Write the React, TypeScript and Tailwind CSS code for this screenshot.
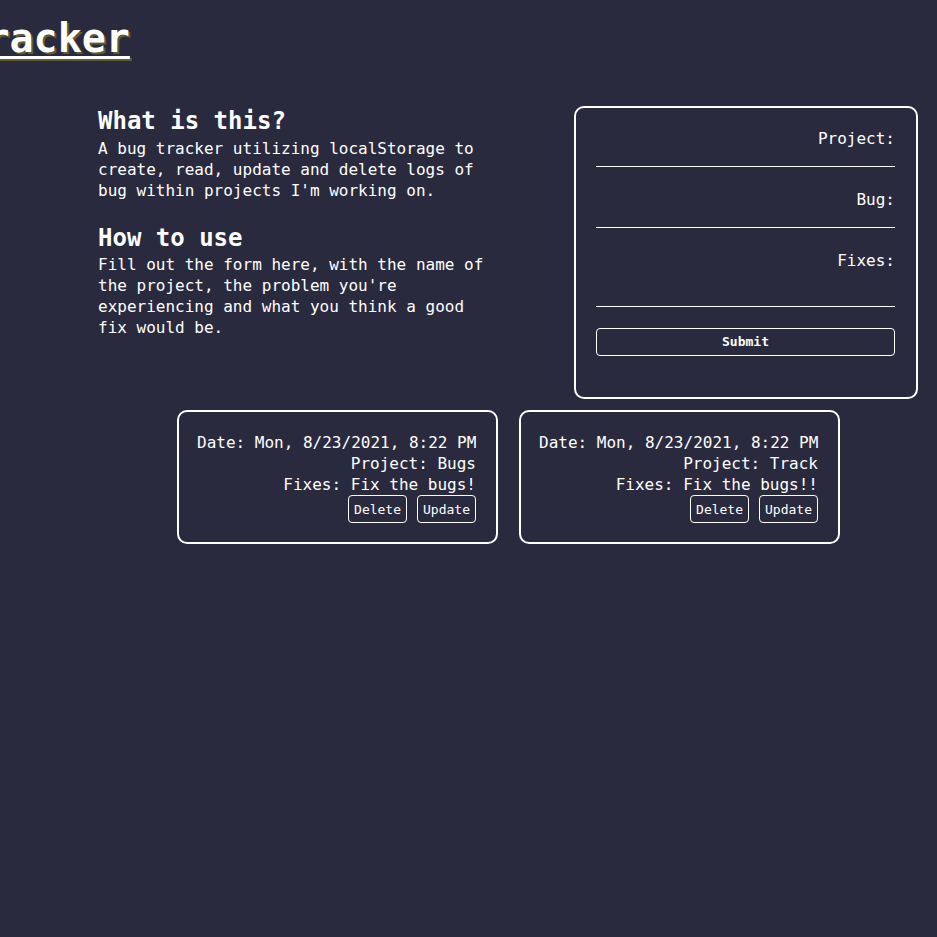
import React from "react";

const font = "font-['DejaVu_Sans_Mono','Liberation_Mono',monospace]";

function Card({ project, fixes }: { project: string; fixes: string }) {
  return (
    <div className="w-[321px] h-[134px] border-2 border-white rounded-[10px] pl-[18px] pr-[20px] pt-[20px] text-right text-[16px] leading-[21px] text-white whitespace-nowrap">
      <div>Date: Mon, 8/23/2021, 8:22 PM</div>
      <div>Project: {project}</div>
      <div>Fixes: {fixes}</div>
      <div className="flex justify-end gap-[10px]">
        <button className="h-[28px] px-[5px] border border-white rounded-[4px] text-[13px] leading-[15px] text-white">Delete</button>
        <button className="h-[28px] px-[5px] border border-white rounded-[4px] text-[13px] leading-[15px] text-white">Update</button>
      </div>
    </div>
  );
}

export default function App() {
  return (
    <div className={`min-h-[937px] w-full bg-[#2a2a3e] text-white overflow-hidden pt-[14px] ${font}`}>
      <h1 className="ml-[-135px] whitespace-nowrap text-[40px] leading-[48px] font-bold underline decoration-[3px] underline-offset-[4px] [text-shadow:2px_2px_0px_#5c5c36]">
        Bug Tracker
      </h1>

      <div className="flex mt-[44px]">
        <div className="ml-[98px] w-[400px] pt-[1px]">
          <h2 className="text-[24px] leading-[28px] font-bold mb-[3px]">What is this?</h2>
          <p className="text-[16px] leading-[21px]">
            A bug tracker utilizing localStorage to create, read, update and delete logs of bug within projects I'm working on.
          </p>
          <h2 className="text-[24px] leading-[28px] font-bold mt-[23px] mb-[2px]">How to use</h2>
          <p className="text-[16px] leading-[21px]">
            Fill out the form here, with the name of the project, the problem you're experiencing and what you think a good fix would be.
          </p>
        </div>

        <form className="ml-auto mr-[19px] w-[344px] border-2 border-white rounded-[10px] pl-[20px] pr-[21px] pt-[20px] pb-[41px] flex flex-col">
          <label className="block text-right text-[16px] leading-[21px]">Project:</label>
          <input className="h-[18px] bg-transparent border-b border-white outline-none text-white" />
          <label className="block text-right text-[16px] leading-[21px] mt-[22px]">Bug:</label>
          <input className="h-[18px] bg-transparent border-b border-white outline-none text-white" />
          <label className="block text-right text-[16px] leading-[21px] mt-[22px]">Fixes:</label>
          <textarea className="h-[36px] bg-transparent border-b border-white outline-none resize-none text-white" />
          <button type="button" className="mt-[21px] h-[28px] border border-white rounded-[4px] text-[13px] font-bold text-white">
            Submit
          </button>
        </form>
      </div>

      <div className="flex gap-[21px] ml-[177px] mt-[11px]">
        <Card project="Bugs" fixes="Fix the bugs!" />
        <Card project="Track" fixes="Fix the bugs!!" />
      </div>
    </div>
  );
}
